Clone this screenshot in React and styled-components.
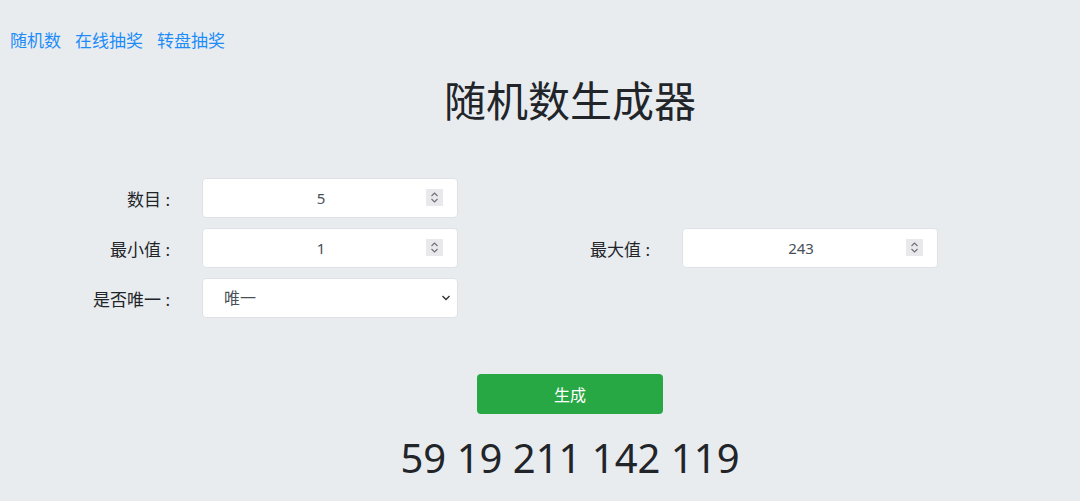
import React from 'react';
import styled, { createGlobalStyle } from 'styled-components';

const GlobalStyle = createGlobalStyle`
  body {
    margin: 0;
    background: #e9ecef;
    font-family: "Noto Sans", "Noto Sans CJK SC", sans-serif;
    color: #212529;
  }
`;

const Nav = styled.nav`
  display: flex;
  gap: 14px;
  padding: 30px 0 0 10px;
  line-height: 22px;
`;

const NavLink = styled.a`
  color: #1d8cf8;
  font-size: 17px;
  text-decoration: none;
`;

const Center = styled.section`
  display: flex;
  flex-direction: column;
  align-items: center;
  padding-left: 60px;
`;

const Title = styled.h1`
  margin: 25px 0 0;
  font-size: 42px;
  font-weight: 400;
  line-height: 48px;
`;

const Form = styled.form`
  display: grid;
  grid-template-columns: 480px 480px;
  row-gap: 10px;
  margin-top: 53px;
`;

const Field = styled.div`
  display: flex;
  align-items: center;
  gap: 32px;
`;

const Label = styled.label`
  width: 170px;
  text-align: right;
  font-size: 17px;
  color: #212529;
`;

const InputWrap = styled.div`
  position: relative;
  width: 256px;
  height: 40px;
`;

const Input = styled.input`
  box-sizing: border-box;
  width: 100%;
  height: 100%;
  padding: 0 30px 0 12px;
  border: 1px solid #dee2e6;
  border-radius: 4px;
  background: #fff;
  font: 15px "Noto Sans", sans-serif;
  color: #495057;
  text-align: center;
  outline: none;
`;

const Spinner = styled.span`
  position: absolute;
  right: 15px;
  top: 11px;
  width: 17px;
  height: 17px;
  background: #e9e9ed;
  display: flex;
  align-items: center;
  justify-content: center;
`;

const Select = styled.select`
  box-sizing: border-box;
  width: 100%;
  height: 100%;
  padding: 0 30px 0 21px;
  border: 1px solid #dee2e6;
  border-radius: 4px;
  background: #fff;
  font: 16px "Noto Sans", "Noto Sans CJK SC", sans-serif;
  color: #495057;
  appearance: none;
  outline: none;
`;

const Caret = styled.svg`
  position: absolute;
  right: 7px;
  top: 16px;
  pointer-events: none;
`;

const Actions = styled(Center)`
  margin-top: 56px;
`;

const Button = styled.button`
  width: 186px;
  height: 40px;
  border: none;
  border-radius: 4px;
  background: #28a745;
  color: #fff;
  font: 16px "Noto Sans", "Noto Sans CJK SC", sans-serif;
`;

const Result = styled.div`
  margin-top: 19px;
  font-size: 40px;
  line-height: 50px;
  color: #212529;
`;

function NumberField({ label, value }) {
  return (
    <Field>
      <Label>{label} :</Label>
      <InputWrap>
        <Input type="text" defaultValue={value} />
        <Spinner>
          <svg width="9" height="13" viewBox="0 0 9 13" fill="none" stroke="#6e6e73" strokeWidth="1.1">
            <path d="M1.5 5 L4.5 2 L7.5 5" />
            <path d="M1.5 8 L4.5 11 L7.5 8" />
          </svg>
        </Spinner>
      </InputWrap>
    </Field>
  );
}

export default function App() {
  return (
    <>
      <GlobalStyle />
      <Nav>
        <NavLink href="#">随机数</NavLink>
        <NavLink href="#">在线抽奖</NavLink>
        <NavLink href="#">转盘抽奖</NavLink>
      </Nav>
      <Center>
        <Title>随机数生成器</Title>
      </Center>
      <Form>
        <NumberField label="数目" value="5" />
        <div />
        <NumberField label="最小值" value="1" />
        <NumberField label="最大值" value="243" />
        <Field>
          <Label>是否唯一 :</Label>
          <InputWrap>
            <Select defaultValue="1">
              <option value="1">唯一</option>
              <option value="0">不唯一</option>
            </Select>
            <Caret width="10" height="8" viewBox="0 0 10 8" fill="none" stroke="#333" strokeWidth="1.4">
              <path d="M1.5 2 L5 5.5 L8.5 2" />
            </Caret>
          </InputWrap>
        </Field>
      </Form>
      <Actions>
        <Button type="button">生成</Button>
        <Result>59 19 211 142 119</Result>
      </Actions>
    </>
  );
}
